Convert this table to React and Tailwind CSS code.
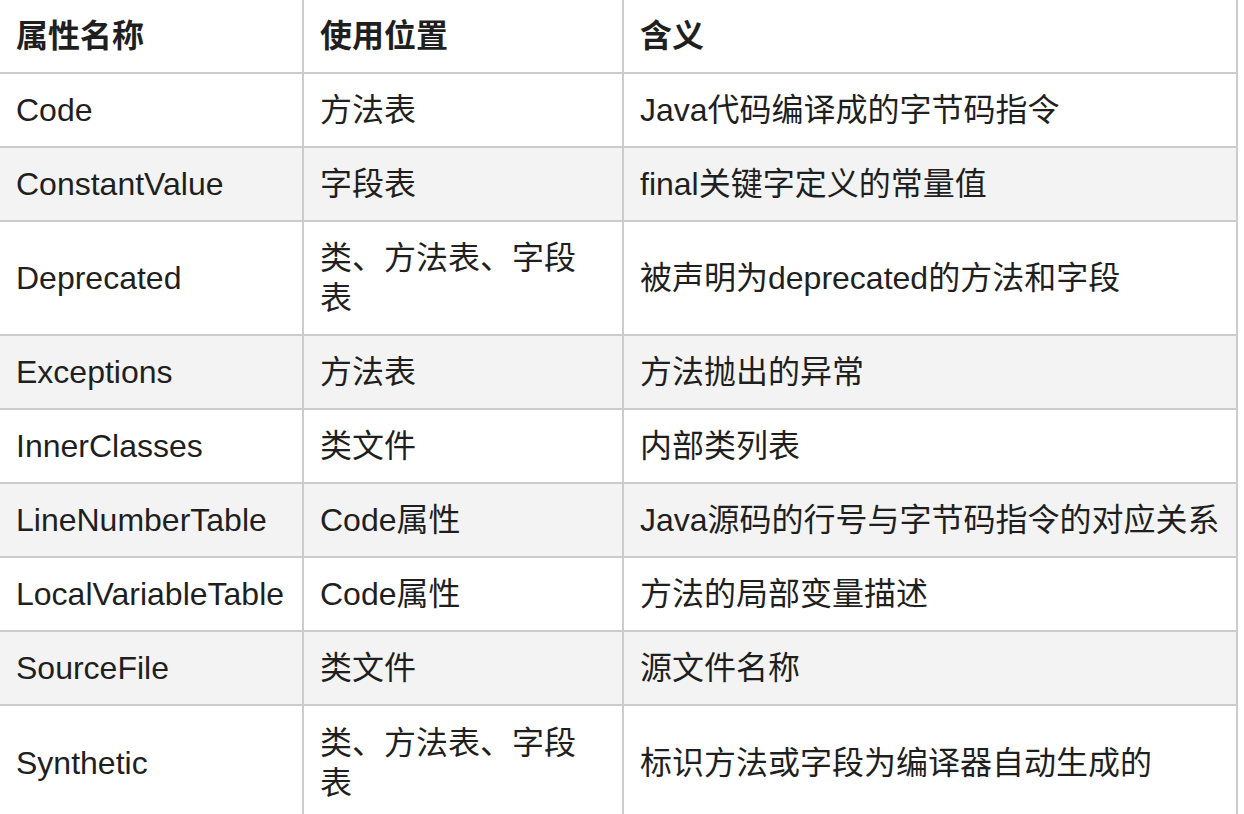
import React from "react";

const rows = [
  { name: "Code", pos: ["方法表"], desc: "Java代码编译成的字节码指令" },
  { name: "ConstantValue", pos: ["字段表"], desc: "final关键字定义的常量值" },
  { name: "Deprecated", pos: ["类、方法表、字段", "表"], desc: "被声明为deprecated的方法和字段" },
  { name: "Exceptions", pos: ["方法表"], desc: "方法抛出的异常" },
  { name: "InnerClasses", pos: ["类文件"], desc: "内部类列表" },
  { name: "LineNumberTable", pos: ["Code属性"], desc: "Java源码的行号与字节码指令的对应关系" },
  { name: "LocalVariableTable", pos: ["Code属性"], desc: "方法的局部变量描述" },
  { name: "SourceFile", pos: ["类文件"], desc: "源文件名称" },
  { name: "Synthetic", pos: ["类、方法表、字段", "表"], desc: "标识方法或字段为编译器自动生成的" },
];

function Row({ children, tall, gray, last }) {
  return (
    <div
      className={
        "flex " +
        (tall ? "h-[114px] " : "h-[74px] ") +
        (gray ? "bg-[#f3f3f3] " : "bg-white ") +
        (last ? "" : "border-b-2 border-[#cccccc]")
      }
    >
      {children}
    </div>
  );
}

function Cell({ w, children, bold }) {
  return (
    <div
      className={
        "flex items-center shrink-0 px-4 border-r-2 border-[#cccccc] whitespace-nowrap " +
        w +
        (bold ? " font-bold" : "")
      }
    >
      <div className="leading-[40px]">{children}</div>
    </div>
  );
}

export default function App() {
  return (
    <div
      className="w-[1244px] h-[814px] overflow-hidden bg-white text-[32px] text-[#1f1f1f]"
      style={{ fontFamily: '"Liberation Sans", "Noto Sans CJK SC", sans-serif' }}
    >
      <div className="w-[1238px]">
        <Row>
          <Cell w="w-[304px]" bold>属性名称</Cell>
          <Cell w="w-[320px]" bold>使用位置</Cell>
          <Cell w="w-[614px]" bold>含义</Cell>
        </Row>
        {rows.map((r, i) => (
          <Row key={r.name} tall={r.pos.length > 1} gray={i % 2 === 1} last={i === rows.length - 1}>
            <Cell w="w-[304px]">{r.name}</Cell>
            <Cell w="w-[320px]">
              {r.pos.map((p, j) => (
                <div key={j}>{p}</div>
              ))}
            </Cell>
            <Cell w="w-[614px]">{r.desc}</Cell>
          </Row>
        ))}
      </div>
    </div>
  );
}
